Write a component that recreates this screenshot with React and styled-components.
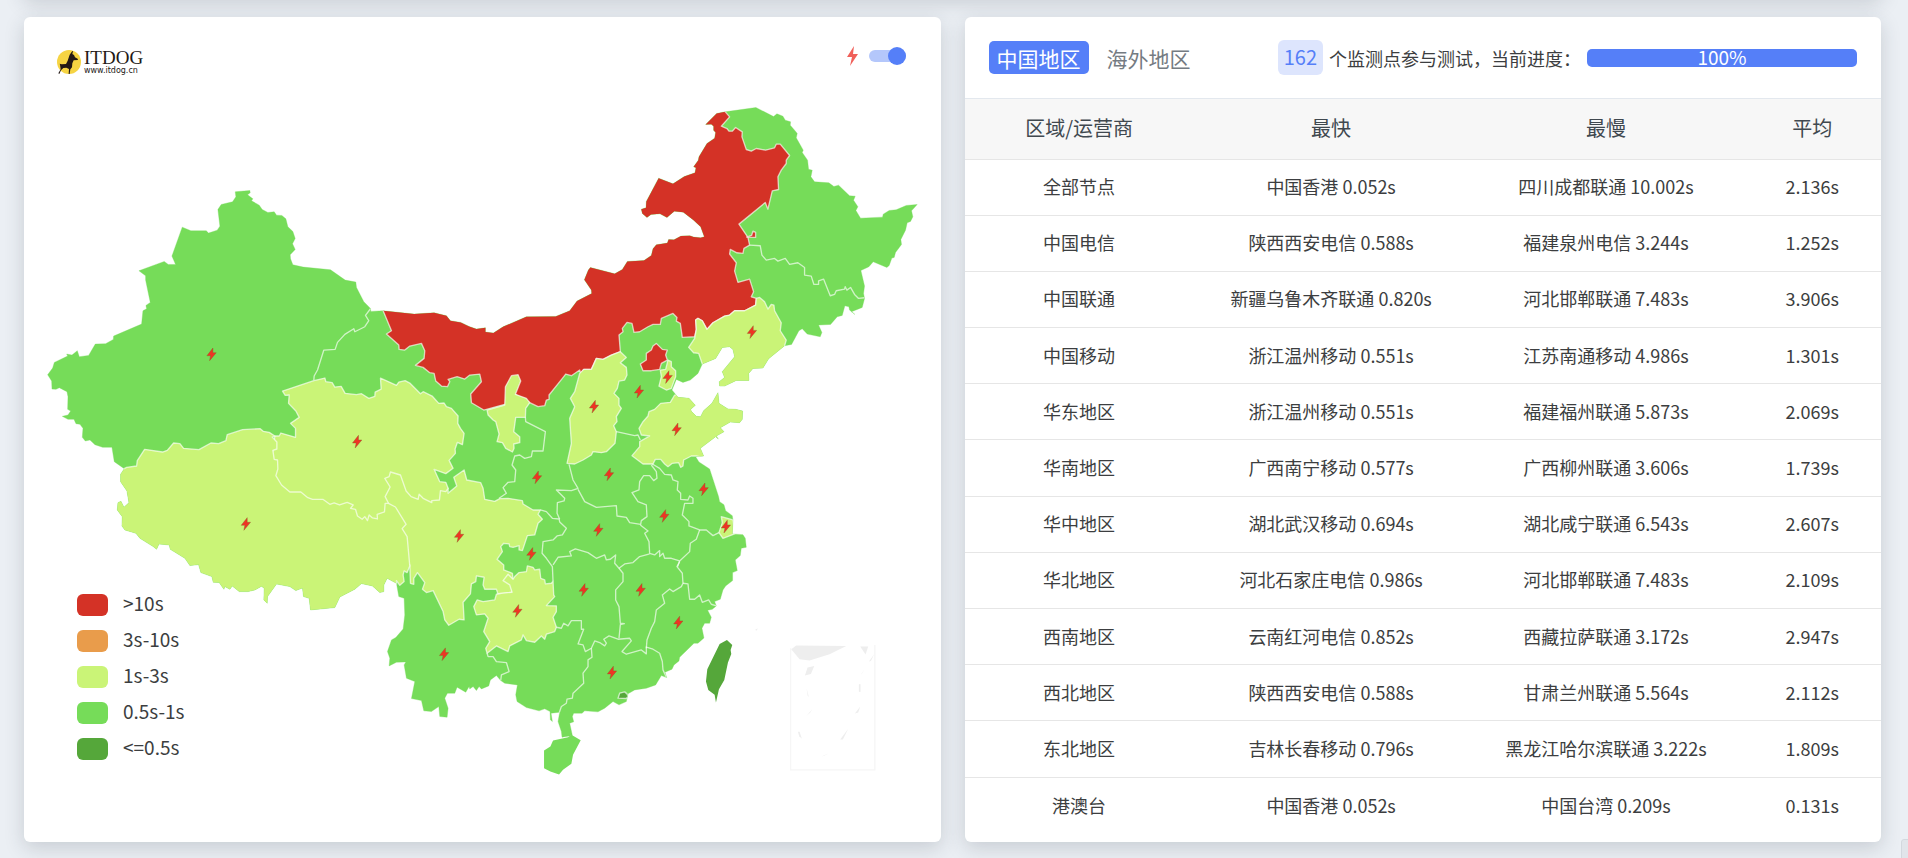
import React, { useState } from "react";
import styled, { createGlobalStyle } from "styled-components";

const colors = {
    over10: "#d43226",
    to10: "#e99c4b",
    to3: "#caf477",
    to1: "#76dc59",
    fast: "#55a73a",
}

const legend = [
    { label: ">10s", color: colors.over10 },
    { label: "3s-10s", color: colors.to10 },
    { label: "1s-3s", color: colors.to3 },
    { label: "0.5s-1s", color: colors.to1 },
    { label: "<=0.5s", color: colors.fast },
]

const rows = [
    ["全部节点", "中国香港 0.052s", "四川成都联通 10.002s", "2.136s"],
    ["中国电信", "陕西西安电信 0.588s", "福建泉州电信 3.244s", "1.252s"],
    ["中国联通", "新疆乌鲁木齐联通 0.820s", "河北邯郸联通 7.483s", "3.906s"],
    ["中国移动", "浙江温州移动 0.551s", "江苏南通移动 4.986s", "1.301s"],
    ["华东地区", "浙江温州移动 0.551s", "福建福州联通 5.873s", "2.069s"],
    ["华南地区", "广西南宁移动 0.577s", "广西柳州联通 3.606s", "1.739s"],
    ["华中地区", "湖北武汉移动 0.694s", "湖北咸宁联通 6.543s", "2.607s"],
    ["华北地区", "河北石家庄电信 0.986s", "河北邯郸联通 7.483s", "2.109s"],
    ["西南地区", "云南红河电信 0.852s", "西藏拉萨联通 3.172s", "2.947s"],
    ["西北地区", "陕西西安电信 0.588s", "甘肃兰州联通 5.564s", "2.112s"],
    ["东北地区", "吉林长春移动 0.796s", "黑龙江哈尔滨联通 3.222s", "1.809s"],
    ["港澳台", "中国香港 0.052s", "中国台湾 0.209s", "0.131s"],
]

// outline of the mainland, every province is clipped to it
const mainland = "143,1124 158,1104 163,1087 203,1068 200,1062 216,1065 232,1052 238,1070 266,1066 286,1032 317,1031 340,1018 341,1008 425,972 429,932 440,926 438,916 451,907 437,840 437,827 417,812 493,784 505,793 527,793 516,768 547,681 573,692 619,692 626,699 652,690 660,678 654,628 664,613 698,605 708,590 706,575 750,571 751,578 743,584 759,596 755,602 778,615 787,628 804,637 823,635 830,645 846,646 858,656 864,680 879,694 886,715 878,731 886,748 871,764 872,776 879,794 910,801 992,809 1036,840 1068,846 1070,862 1092,905 1112,925 1113,934 1150,932 1243,942 1303,938 1340,947 1352,962 1383,967 1408,979 1430,987 1457,983 1457,996 1481,999 1510,980 1580,950 1668,949 1710,932 1732,903 1776,880 1775,870 1754,839 1766,810 1772,802 1845,821 1868,808 1883,784 1933,781 1955,766 1960,746 1970,734 2003,729 2007,718 2023,719 2044,708 2071,707 2082,711 2103,713 2114,710 2103,680 2082,660 2051,636 2024,633 2002,652 1981,641 1954,643 1942,652 1928,640 1925,627 1939,623 1940,604 1977,534 2020,551 2054,529 2086,518 2089,503 2082,500 2096,480 2098,470 2122,430 2145,414 2148,397 2142,390 2142,378 2135,372 2118,373 2151,340 2177,335 2269,322 2322,349 2332,341 2350,348 2357,360 2373,365 2372,375 2385,390 2393,400 2390,413 2411,450 2408,457 2424,480 2427,507 2438,510 2434,530 2445,545 2488,548 2503,559 2517,555 2550,587 2567,588 2562,600 2575,620 2569,631 2583,654 2649,651 2651,642 2669,631 2690,629 2720,616 2753,613 2736,632 2740,650 2733,664 2723,668 2718,690 2704,718 2706,733 2688,757 2684,772 2677,774 2669,796 2662,802 2621,785 2608,800 2584,811 2595,858 2592,880 2595,895 2588,922 2556,935 2566,943 2550,930 2548,920 2536,917 2528,946 2513,950 2493,973 2457,975 2467,997 2462,1010 2423,1002 2408,986 2398,992 2376,1033 2355,1037 2307,1076 2290,1104 2260,1105 2247,1120 2248,1141 2210,1141 2175,1158 2160,1158 2159,1145 2175,1132 2168,1115 2205,1070 2200,1048 2190,1040 2168,1042 2148,1075 2108,1092 2095,1120 2072,1140 2050,1147 2030,1138 2017,1170 2035,1192 2068,1195 2087,1216 2073,1228 2075,1234 2090,1249 2103,1250 2112,1232 2137,1210 2155,1178 2158,1210 2185,1227 2208,1228 2229,1233 2228,1258 2220,1268 2192,1266 2162,1283 2173,1295 2150,1308 2156,1317 2148,1310 2102,1345 2112,1368 2088,1370 2098,1386 2130,1407 2157,1490 2160,1505 2173,1514 2178,1532 2198,1547 2200,1560 2198,1602 2230,1604 2237,1615 2240,1642 2225,1645 2222,1667 2207,1680 2213,1712 2199,1718 2199,1742 2178,1758 2170,1770 2162,1798 2145,1805 2150,1818 2138,1828 2124,1831 2135,1852 2130,1870 2115,1870 2107,1885 2113,1914 2095,1930 2083,1930 2040,1972 2038,1983 2023,1995 2017,2008 1996,2017 2001,2033 1985,2027 1968,2055 1940,2065 1905,2070 1885,2082 1880,2105 1858,2115 1840,2105 1815,2125 1795,2136 1755,2133 1747,2140 1722,2140 1718,2150 1722,2166 1710,2170 1718,2207 1687,2212 1685,2195 1675,2165 1680,2137 1654,2140 1658,2165 1652,2160 1651,2135 1635,2127 1618,2133 1580,2123 1552,2105 1548,2085 1553,2055 1515,2050 1503,2042 1490,2027 1472,2040 1467,2058 1445,2067 1438,2060 1430,2072 1420,2060 1410,2067 1408,2060 1398,2077 1372,2062 1365,2080 1343,2080 1335,2095 1345,2125 1342,2152 1320,2150 1317,2120 1295,2135 1272,2133 1265,2102 1235,2096 1245,2045 1220,2035 1213,1995 1218,1986 1190,1987 1168,1998 1170,1975 1163,1955 1175,1920 1188,1913 1210,1887 1215,1845 1213,1795 1197,1790 1190,1750 1162,1735 1152,1755 1152,1775 1140,1778 1118,1758 1085,1751 1065,1768 1020,1791 1005,1823 932,1830 928,1795 911,1790 908,1764 888,1772 870,1760 830,1752 803,1790 802,1810 792,1800 793,1765 785,1759 765,1770 745,1775 718,1775 697,1758 690,1768 675,1760 672,1768 658,1748 640,1747 636,1730 603,1718 596,1694 570,1697 555,1675 511,1648 508,1635 477,1632 470,1648 460,1640 420,1615 408,1600 375,1590 366,1578 367,1550 352,1530 354,1508 363,1504 372,1522 387,1508 381,1473 362,1445 362,1423 373,1406 343,1385 336,1342 308,1342 285,1334 270,1320 256,1323 247,1312 249,1285 240,1273 228,1271 222,1258 204,1258 187,1249 204,1245 212,1233 203,1228 204,1190 201,1175 178,1163 168,1168 156,1167 155,1143"

// painted in this order, later ones cover the rough edges of earlier ones
const provinces = [
    {
        name: "内蒙古",
        color: colors.over10,
        points: "1150,932 1175,992 1160,1002 1197,1035 1198,1048 1215,1050 1230,1038 1265,1030 1275,1052 1273,1075 1247,1096 1270,1102 1290,1118 1303,1120 1308,1143 1325,1158 1343,1160 1350,1145 1345,1138 1372,1130 1395,1137 1410,1125 1440,1122 1445,1145 1413,1182 1415,1208 1452,1230 1515,1213 1547,1183 1590,1208 1615,1220 1635,1217 1640,1200 1648,1198 1648,1185 1688,1135 1698,1122 1715,1127 1740,1110 1743,1120 1752,1108 1775,1108 1790,1075 1810,1078 1835,1065 1862,1055 1858,1005 1870,995 1868,985 1882,967 1897,970 1903,997 1920,995 1945,980 1960,973 1982,973 1985,955 2020,940 2032,952 2030,963 2042,970 2048,1012 2085,1010 2090,988 2088,960 2095,955 2108,962 2122,988 2140,968 2175,948 2190,945 2205,932 2235,932 2268,915 2270,895 2255,890 2262,875 2250,837 2215,847 2205,813 2210,788 2190,762 2192,748 2212,758 2230,760 2233,745 2250,735 2245,712 2218,672 2297,607 2305,627 2318,572 2337,568 2335,530 2345,510 2360,490 2360,480 2370,466 2342,432 2330,432 2325,443 2298,450 2270,445 2255,453 2240,448 2227,410 2228,395 2208,382 2198,393 2188,393 2182,385 2165,378 2190,350 2177,335 2150,300 1150,300",
    },
    { name: "内蒙古", color: colors.over10, points: "2241,711 2256,706 2260,693 2268,697 2268,712" },
    {
        name: "四川",
        color: colors.to3,
        points: "1345,1465 1345,1480 1371,1458 1362,1432 1393,1410 1401,1440 1443,1448 1450,1465 1455,1498 1485,1504 1500,1496 1525,1495 1568,1502 1570,1512 1600,1530 1622,1530 1615,1543 1628,1558 1615,1570 1605,1605 1583,1607 1568,1652 1558,1650 1558,1637 1540,1642 1530,1640 1528,1632 1512,1630 1503,1640 1508,1655 1492,1678 1512,1695 1512,1710 1538,1720 1540,1738 1537,1777 1495,1783 1490,1768 1455,1768 1450,1755 1453,1732 1430,1728 1428,1745 1415,1752 1412,1782 1390,1807 1393,1860 1378,1858 1347,1876 1335,1860 1330,1835 1300,1772 1280,1778 1268,1768 1275,1748 1253,1718 1242,1735 1242,1753 1232,1750 1230,1695 1150,1650 1100,1450 1150,1390 1250,1390 1300,1450",
    },
    {
        name: "青海",
        color: colors.to3,
        points: "825,1308 838,1308 843,1299 887,1312 887,1285 872,1270 898,1252 888,1233 866,1210 868,1185 856,1186 848,1173 942,1142 975,1134 978,1145 997,1148 1005,1161 1024,1159 1036,1180 1070,1184 1085,1181 1107,1195 1125,1189 1126,1176 1144,1167 1142,1134 1190,1156 1197,1146 1216,1142 1230,1149 1262,1181 1270,1175 1297,1188 1317,1210 1333,1209 1340,1220 1355,1225 1375,1248 1374,1270 1382,1285 1393,1300 1388,1334 1373,1327 1366,1347 1367,1360 1348,1381 1360,1405 1338,1421 1303,1408 1320,1445 1338,1447 1345,1465 1338,1475 1322,1472 1319,1500 1296,1502 1296,1508 1270,1495 1258,1483 1255,1498 1234,1490 1219,1473 1202,1425 1172,1416 1168,1430 1155,1435 1171,1461 1156,1490 1166,1510 1156,1600 1000,1600 800,1480",
    },
    {
        name: "西藏",
        color: colors.to3,
        points: "373,1406 380,1402 410,1398 412,1382 434,1348 488,1356 502,1351 521,1329 540,1331 551,1345 597,1349 633,1329 656,1331 678,1322 682,1304 728,1289 781,1286 790,1294 808,1297 825,1308 817,1311 831,1326 831,1347 819,1351 823,1378 833,1380 834,1407 828,1427 845,1455 870,1476 903,1476 924,1493 938,1498 969,1498 990,1513 1003,1509 1019,1515 1042,1507 1060,1515 1052,1525 1067,1528 1073,1548 1087,1558 1095,1550 1103,1562 1108,1545 1118,1554 1133,1557 1132,1543 1154,1536 1156,1510 1166,1510 1187,1521 1219,1573 1207,1586 1222,1610 1230,1698 1222,1718 1213,1713 1210,1725 1213,1745 1200,1756 1190,1742 1190,1755 1160,1765 1100,1900 300,1900 300,1420",
    },
    {
        name: "贵州",
        color: colors.to3,
        points: "1540,1738 1545,1730 1558,1718 1580,1715 1583,1698 1600,1702 1605,1710 1620,1708 1623,1735 1635,1740 1637,1752 1655,1750 1660,1744 1662,1785 1665,1790 1640,1817 1670,1818 1670,1835 1660,1852 1670,1882 1665,1895 1640,1903 1635,1918 1625,1908 1605,1927 1580,1922 1570,1905 1565,1920 1530,1938 1525,1955 1490,1938 1462,1960 1458,1945 1470,1925 1452,1895 1465,1855 1455,1842 1430,1845 1422,1820 1432,1800 1450,1805 1485,1800 1490,1783 1505,1780 1537,1777 1530,1755 1510,1742 1525,1723",
    },
    {
        name: "宁夏",
        color: colors.to3,
        points: "1462,1230 1515,1215 1517,1160 1535,1127 1555,1124 1563,1143 1547,1183 1580,1195 1590,1208 1578,1225 1577,1252 1548,1252 1542,1295 1560,1310 1560,1328 1542,1332 1543,1345 1538,1356 1518,1345 1508,1328 1492,1325 1498,1302 1488,1265 1480,1260 1465,1245",
    },
    {
        name: "山西",
        color: colors.to3,
        points: "1862,1055 1880,1072 1862,1088 1880,1102 1882,1125 1875,1140 1858,1143 1853,1165 1843,1180 1858,1195 1858,1215 1865,1225 1850,1250 1852,1265 1842,1277 1850,1295 1846,1330 1820,1355 1805,1358 1780,1355 1775,1365 1750,1380 1725,1392 1702,1390 1715,1330 1710,1255 1725,1220 1712,1195 1725,1175 1740,1120 1752,1108 1775,1108 1790,1075 1810,1078 1835,1065",
    },
    {
        name: "山东",
        color: colors.to3,
        points: "2025,1185 2012,1207 1983,1210 1965,1228 1948,1235 1945,1248 1930,1265 1918,1285 1925,1305 1950,1308 1920,1325 1920,1340 1897,1367 1930,1392 1960,1392 1967,1378 1983,1378 1995,1392 2005,1400 2018,1390 2037,1388 2043,1402 2050,1398 2052,1380 2075,1368 2090,1368 2140,1380 2250,1300 2250,1165 2145,1160",
    },
    {
        name: "辽宁",
        color: colors.to3,
        points: "2270,895 2280,892 2295,905 2305,927 2315,913 2323,915 2325,932 2345,968 2342,992 2360,1020 2355,1037 2380,1160 2158,1166 2120,1130 2108,1092 2097,1060 2082,1058 2067,1042 2085,1015 2090,988 2088,960 2095,955 2108,962 2122,988 2140,968 2175,948 2190,945 2205,932 2235,932 2268,915",
    },
    {
        name: "北京",
        color: colors.over10,
        points: "1940,1060 1955,1050 1960,1038 1970,1030 1988,1048 2003,1050 1998,1065 2003,1080 1985,1090 1980,1108 1955,1112 1930,1112 1922,1092 1940,1080",
    },
    {
        name: "天津",
        color: colors.to3,
        points: "2005,1080 2015,1085 2015,1100 2028,1112 2028,1130 2015,1165 2000,1170 1978,1158 1985,1130 1982,1110 1998,1108",
    },
    { name: "上海", color: colors.to3, points: "2165,1550 2200,1560 2205,1602 2170,1615 2158,1598 2168,1568" },
    { name: "香港", color: colors.fast, points: "1855,2095 1860,2080 1875,2076 1882,2082 1885,2090 1880,2096" },
]

const islands = [
    {
        name: "海南",
        color: colors.to1,
        points: "1715,2205 1743,2221 1720,2265 1715,2292 1690,2310 1678,2324 1652,2315 1633,2305 1633,2252 1652,2240 1660,2222 1705,2212",
    },
    {
        name: "台湾",
        color: colors.fast,
        points: "2182,1920 2198,1935 2193,1950 2195,1962 2185,1988 2174,2040 2158,2068 2149,2108 2145,2085 2126,2070 2119,2045 2123,2008 2160,1932",
    },
]

const borders = [
    "1112,926 1097,946 1107,962 1095,980 1065,995 1062,986 1035,1003 1013,1027 1006,1048 972,1050 953,1110 943,1128 942,1140",
    "1577,1252 1578,1265 1637,1295 1630,1353 1598,1353 1595,1370 1575,1375 1560,1365 1545,1368 1537,1395 1548,1410 1545,1445 1525,1447 1510,1463 1520,1480 1498,1495",
    "1708,1393 1720,1440 1735,1465 1715,1472 1670,1470 1695,1495 1693,1503 1673,1508 1672,1540 1680,1558",
    "1735,1468 1755,1505 1790,1522 1850,1517 1852,1548 1880,1552 1890,1568 1923,1573 1925,1562 1942,1550 1940,1515 1915,1505 1897,1478 1918,1470 1920,1445 1932,1427 1950,1427 1962,1442 1972,1435 1970,1415 1955,1395",
    "1850,1295 1905,1307 1915,1305 1922,1320",
    "1958,1392 1980,1405 1995,1423 2015,1425 2020,1440 2035,1445 2033,1470 2043,1480 2043,1498 2065,1500 2070,1488 2080,1495 2080,1510 2055,1510 2048,1545 2068,1565 2068,1578 2100,1590 2120,1590 2140,1607 2158,1598",
    "2100,1590 2090,1618 2072,1630 2070,1655 2040,1683 2015,1675 1995,1675 1990,1660 1980,1670 1980,1652 1965,1665 1950,1660 1948,1625 1935,1600 1945,1593 1922,1575",
    "2040,1683 2034,1700",
    "1950,1662 1920,1670 1900,1688 1875,1692 1858,1705 1845,1690 1848,1665 1832,1678 1820,1680 1815,1665 1790,1675 1765,1658 1727,1647 1710,1655 1715,1668 1675,1672 1660,1695",
    "1622,1530 1640,1535 1658,1555 1678,1557 1680,1566 1700,1585 1688,1605 1672,1608 1660,1620 1630,1625 1627,1660 1640,1675 1658,1700 1660,1744",
    "1858,1705 1870,1720 1870,1745 1848,1770 1848,1800 1858,1820 1862,1870 1874,1871 1862,1874 1858,1915",
    "1670,1882 1685,1885 1692,1870 1705,1878 1715,1862 1745,1862 1745,1888 1752,1888 1735,1932 1750,1935 1757,1955 1775,1945 1785,1923 1800,1928 1815,1938 1820,1930 1812,1918 1828,1908 1855,1918 1890,1915 1895,1923 1867,1955 1880,1963 1925,1950 1940,1962 1940,1940",
    "1940,1945 1942,1920 1955,1885 1965,1865 1970,1830 1995,1810 1988,1785 2010,1767 2020,1775 2045,1760 2050,1750 2048,1720 2032,1700 2040,1685",
    "2050,1750 2065,1752 2070,1798 2085,1798 2100,1785 2108,1807 2127,1800 2135,1813 2150,1818",
    "1940,1942 1960,1948 1980,1960 1988,1985 1990,2010 2000,2032",
    "1775,1945 1777,1972 1765,1980 1765,2000 1750,2020 1752,2050 1720,2080 1718,2095 1702,2098 1700,2110 1685,2120 1678,2140",
    "1462,1960 1465,1970 1480,1970 1490,1985 1520,1988 1528,2015 1505,2025 1503,2042",
    "2250,735 2282,737 2287,765 2300,780 2325,775 2335,783 2357,775 2370,793 2395,788 2415,802 2415,825 2435,828 2443,853 2457,853 2457,842 2472,837 2492,887 2505,883 2510,872 2535,867 2537,860 2542,870 2553,862 2565,883 2577,895 2595,893",
]

const southSea = [
    "2375,1948 2390,1937 2540,1938 2490,1963 2430,1982 2400,1978",
    "2424,2003 2444,1998 2434,2022 2416,2027",
    "2582,1940 2606,1940 2598,1964",
    "2608,1985 2624,1963 2614,1983",
    "2583,2026 2596,2006 2588,2020",
    "2578,2053 2583,2053 2583,2076 2578,2076",
    "2566,2141 2582,2120 2576,2138",
    "2522,2219 2546,2187 2530,2219",
    "2466,2270 2488,2260 2474,2268",
    "2395,2196 2400,2196 2407,2217 2399,2209",
    "2420,2149 2438,2128 2432,2138",
    "2421,2066 2428,2092 2424,2086",
    "2266,1890 2274,1885 2272,1892",
]

const bolts = [
    [635, 1063], [1072, 1325], [738, 1572], [1378, 1608], [1612, 1432], [1783, 1220],
    [1918, 1175], [2004, 1131], [1828, 1423], [1796, 1590], [1994, 1548], [1595, 1662],
    [2031, 1288], [2112, 1468], [2179, 1580], [1752, 1770], [1923, 1770], [1553, 1833],
    [1333, 1963], [1837, 2018], [2036, 1868], [2257, 996],
]

function Logo() {
    return (
        <LogoLink href="#">
            <svg width="24" height="24" viewBox="0 0 72 72" aria-hidden="true">
                <circle cx="36" cy="36" r="36" fill="#f6d443" />
                <path
                    d="M46 3 L48 4 L46 12 L51 15 L54 22 L63 27 L62 30 L50 31 L46 40 L45 52 L40 58 L38 72 L35 72 L36 57 L28 53 L19 54 L12 61 L7 72 L4 70 L11 58 L9 44 L8 41 L14 43 L27 42 L32 32 L38 14 Z"
                    fill="#231815"
                />
            </svg>
            <LogoText>
                <strong>ITDOG</strong>
                <small>www.itdog.cn</small>
            </LogoText>
        </LogoLink>
    );
}

function ChinaMap({ showBolts }) {
    return (
        <MapSvg viewBox="72 240 2751 2286" role="img" aria-label="中国地图">
            <clipPath id="mainland">
                <polygon points={mainland} />
            </clipPath>
            <polygon points={mainland} fill={colors.to1} stroke="#76dc59" strokeOpacity="0.5" strokeWidth="2" />
            <g clipPath="url(#mainland)" stroke="#fff" strokeOpacity="0.65" strokeWidth="4" strokeLinejoin="round">
                {provinces.map((item, i) => (
                    <polygon key={i} points={item.points} fill={item.color} />
                ))}
                {borders.map((points, i) => (
                    <polyline key={i} points={points} fill="none" />
                ))}
            </g>
            {islands.map(item => (
                <polygon key={item.name} points={item.points} fill={item.color} />
            ))}
            <path d="M2373 1945V2310H2626V1935" fill="none" stroke="#f6f6f6" strokeWidth="4" />
            {southSea.map((points, i) => (
                <polygon key={i} points={points} fill="#eee" />
            ))}
            {showBolts && bolts.map(([x, y]) => (
                <polygon
                    key={`${x}-${y}`}
                    transform={`translate(${x} ${y})`}
                    points="4,-19 -14,4 -3,4 -6,19 14,-5 4,-5"
                    fill="#ee3524"
                    stroke="#8a5a26"
                    strokeOpacity="0.6"
                    strokeWidth="2"
                />
            ))}
        </MapSvg>
    );
}

export default function App() {

    const [showBolts, setShowBolts] = useState(true);
    const [region, setRegion] = useState("中国地区");

    return (
        <>
            <GlobalStyle />
            <PreviousCard />
            <Page>
                <Card>
                    <MapHeader>
                        <Logo />
                        <SwitchLabel>
                            <svg width="11" height="20" viewBox="0 0 11 20" role="img" aria-label="闪电">
                                <path d="M7 0 0 11H5L3 20 11 8H6Z" fill="#f0605a" />
                            </svg>
                            <Switch
                                type="checkbox"
                                checked={showBolts}
                                onChange={() => setShowBolts(!showBolts)}
                            />
                        </SwitchLabel>
                    </MapHeader>
                    <ChinaMap showBolts={showBolts} />
                    <Legend>
                        {legend.map(item => (
                            <LegendItem key={item.label} color={item.color}>{item.label}</LegendItem>
                        ))}
                    </Legend>
                </Card>

                <Card>
                    <TableHeader>
                        <Tabs>
                            {["中国地区", "海外地区"].map(name => (
                                <Tab key={name} type="button" $active={name === region} onClick={() => setRegion(name)}>
                                    {name}
                                </Tab>
                            ))}
                        </Tabs>
                        <Status>
                            <Badge>162</Badge>
                            <span>个监测点参与测试，当前进度：</span>
                            <Progress role="progressbar" aria-valuenow={100} aria-label="当前进度">100%</Progress>
                        </Status>
                    </TableHeader>
                    <TableArea>
                        <Table>
                            <thead>
                                <tr>
                                    <Th $width="25%">区域/运营商</Th>
                                    <Th $width="30%">最快</Th>
                                    <Th $width="30%">最慢</Th>
                                    <Th $width="15%">平均</Th>
                                </tr>
                            </thead>
                            <tbody>
                                {rows.map(row => (
                                    <tr key={row[0]}>
                                        {row.map((cell, i) => <Td key={i}>{cell}</Td>)}
                                    </tr>
                                ))}
                            </tbody>
                        </Table>
                    </TableArea>
                </Card>
            </Page>
            <BackTop type="button" aria-label="返回顶部" />
        </>
    );

}
// ::::::::::Styled-Components::::::::::
const GlobalStyle = createGlobalStyle`
    * {
        box-sizing: border-box;
    }
    body {
        margin: 0;
        background-color: #ebeff4;
        color: #3c3e40;
        font-family: "Noto Sans CJK SC", "Noto Sans", sans-serif;
        font-size: 18px;
    }
`
const shadow = "0 6px 20px rgba(40, 50, 60, 0.18)";

const PreviousCard = styled.div`
    height: 40px;
    margin: -43px 27px 3px 24px;
    border-radius: 6px;
    background-color: #FFFFFF;
    box-shadow: ${shadow};
`
const Page = styled.main`
    min-height: 100vh;
    display: grid;
    grid-template-columns: 1fr 1fr;
    gap: 24px;
    padding: 17px 27px 16px 24px;
`
const Card = styled.section`
    position: relative;
    display: flex;
    flex-direction: column;
    min-width: 0;
    background-color: #FFFFFF;
    border-radius: 6px;
    box-shadow: ${shadow};
`
const MapHeader = styled.header`
    display: flex;
    justify-content: space-between;
    align-items: flex-start;
    height: 63px;
    padding: 30px 35px 0 33px;
`
const LogoLink = styled.a`
    display: flex;
    gap: 3px;
    padding: 3px 0;
    color: #231815;
    text-decoration: none;
`
const LogoText = styled.span`
    display: flex;
    flex-direction: column;

    strong{
        font-family: "Liberation Serif", serif;
        font-size: 19px;
        font-weight: 400;
        line-height: 16px;
    }
    small{
        font-family: "DejaVu Sans", sans-serif;
        font-size: 8px;
        line-height: 9px;
    }
`
const SwitchLabel = styled.label`
    display: flex;
    align-items: center;
    gap: 11px;
    height: 18px;
    cursor: pointer;
`
const Switch = styled.input`
    appearance: none;
    display: flex;
    align-items: center;
    justify-content: ${props => props.checked ? "flex-end" : "flex-start"};
    width: 37px;
    height: 12px;
    margin: 0;
    border-radius: 6px;
    background-color: #b4c7fb;
    cursor: pointer;

    &::before{
        content: "";
        width: 18px;
        height: 18px;
        border-radius: 50%;
        background-color: #557ff8;
    }
`
const MapSvg = styled.svg`
    display: block;
    flex: 1;
    width: 100%;
    min-height: 0;
`
const Legend = styled.ul`
    position: absolute;
    left: 53px;
    bottom: 82px;
    display: flex;
    flex-direction: column;
    gap: 14px;
    margin: 0;
    padding: 0;
    list-style: none;
`
const LegendItem = styled.li`
    display: flex;
    align-items: flex-start;
    gap: 15px;
    height: 22px;
    font-size: 19px;
    line-height: 18px;

    &::before{
        content: "";
        width: 31px;
        height: 22px;
        border-radius: 6px;
        background-color: ${props => props.color};
    }
`
const TableHeader = styled.header`
    display: flex;
    justify-content: space-between;
    align-items: center;
    height: 82px;
    padding: 0 24px;
    border-bottom: 1px solid #e3e8ee;
`
const Tabs = styled.nav`
    display: flex;
    gap: 10px;
`
const Tab = styled.button`
    height: 33px;
    padding: 0 8px;
    border: none;
    border-radius: 5px;
    background-color: ${props => props.$active ? "#557ff8" : "transparent"};
    color: ${props => props.$active ? "#FFFFFF" : "#747b82"};
    font-family: inherit;
    font-size: 21px;
    line-height: 32px;
    cursor: pointer;
`
const Status = styled.div`
    display: flex;
    align-items: center;
    gap: 6px;
    line-height: 24px;
    white-space: nowrap;
`
const Badge = styled.span`
    height: 35px;
    padding: 0 6px;
    border-radius: 6px;
    background-color: #dde5fd;
    color: #557ff8;
    font-size: 20px;
    line-height: 33px;
`
const Progress = styled.div`
    width: 270px;
    height: 18px;
    border-radius: 5px;
    background-color: #557ff8;
    color: #FFFFFF;
    font-size: 19px;
    line-height: 16px;
    text-align: center;
`
const TableArea = styled.div`
    flex: 1;
    padding-bottom: 7px;
`
const Table = styled.table`
    width: 100%;
    height: 100%;
    table-layout: fixed;
    border-collapse: collapse;
    text-align: center;
`
const Th = styled.th`
    width: ${props => props.$width};
    height: 60px;
    padding: 0 0 2px;
    background-color: #f7f7f7;
    border-bottom: 1px solid #e6e6e6;
    color: #40484f;
    font-size: 20px;
    font-weight: 400;
`
const Td = styled.td`
    padding: 12px 0 14px;
    border-bottom: 1px solid #e6e6e6;
    line-height: 26px;

    tr:last-child &{
        padding: 13px 0 15px;
        border-bottom: none;
    }
`
const BackTop = styled.button`
    position: fixed;
    right: -33px;
    bottom: -21px;
    width: 40px;
    height: 40px;
    border: 1px solid #d3d8de;
    border-radius: 3px;
    background-color: #e1e5ea;
`
